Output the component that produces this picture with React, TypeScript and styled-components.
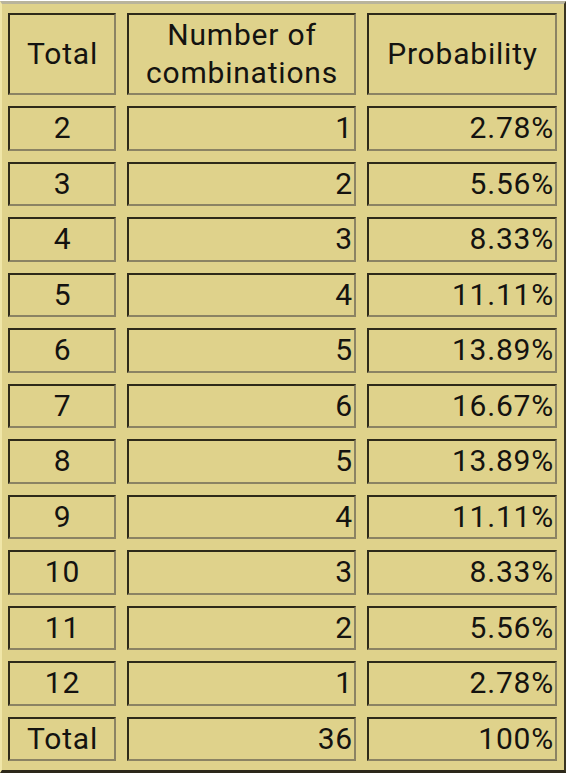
import styled, { createGlobalStyle } from "styled-components";

const GlobalStyle = createGlobalStyle`
  html, body {
    margin: 0;
    padding: 0;
    background: #ffffff;
  }
`;

const Board = styled.div`
  margin-top: 1px;
  width: 566px;
  box-sizing: border-box;
  padding: 9px 7px 9px 6px;
  background-color: #dfd28b;
  border-style: solid;
  border-width: 3px 2px 3px 2px;
  border-color: #b9b49c #3a3522 #2c281a #f0e6a8;
  display: grid;
  grid-template-columns: 108px 229px 190px;
  grid-template-rows: 82px;
  grid-auto-rows: 44.5px;
  column-gap: 11px;
  row-gap: 11px;
  font-family: Roboto, "Liberation Sans", sans-serif;
  font-size: 30px;
  letter-spacing: 0.8px;
  color: #141310;
`;

const Cell = styled.div<{ $align?: "center" | "right" }>`
  box-sizing: border-box;
  display: flex;
  align-items: center;
  justify-content: ${(p) => (p.$align === "right" ? "flex-end" : "center")};
  text-align: ${(p) => (p.$align === "right" ? "right" : "center")};
  padding: 0 1px 0 2px;
  border-style: solid;
  border-width: 2px;
  border-color: #2e2a19 #8b8363 #8b8363 #2e2a19;
  line-height: 38px;
  white-space: nowrap;
`;

const HeadText = styled.span`
  display: block;
  padding-bottom: 1px;
`;

const rows: [string, string, string][] = [
  ["2", "1", "2.78%"],
  ["3", "2", "5.56%"],
  ["4", "3", "8.33%"],
  ["5", "4", "11.11%"],
  ["6", "5", "13.89%"],
  ["7", "6", "16.67%"],
  ["8", "5", "13.89%"],
  ["9", "4", "11.11%"],
  ["10", "3", "8.33%"],
  ["11", "2", "5.56%"],
  ["12", "1", "2.78%"],
  ["Total", "36", "100%"],
];

const App = () => {
  return (
    <>
      <GlobalStyle />
      <Board>
        <Cell>
          <HeadText>Total</HeadText>
        </Cell>
        <Cell>
          <HeadText>
            Number of
            <br />
            combinations
          </HeadText>
        </Cell>
        <Cell>
          <HeadText>Probability</HeadText>
        </Cell>
        {rows.map(([total, count, prob]) => (
          <>
            <Cell key={`t${total}`}>{total}</Cell>
            <Cell key={`c${total}`} $align="right">
              {count}
            </Cell>
            <Cell key={`p${total}`} $align="right">
              {prob}
            </Cell>
          </>
        ))}
      </Board>
    </>
  );
};

export default App;
